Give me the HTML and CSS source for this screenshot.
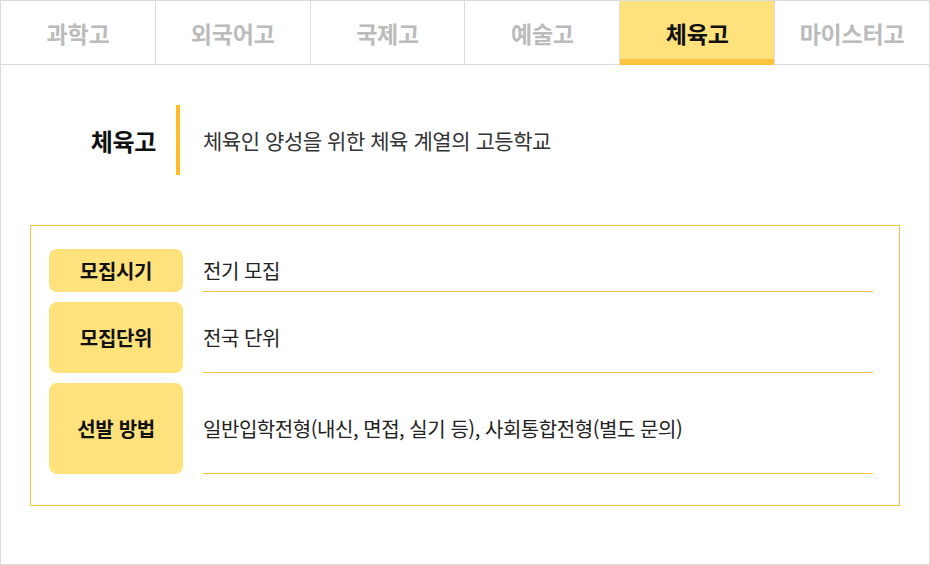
FILE: index.html
```html
<!DOCTYPE html>
<html lang="ko">
<head>
<meta charset="utf-8">
<title>체육고</title>
<link rel="stylesheet" href="styles.css">
</head>
<body>
<div class="frame">
  <nav class="tabs">
    <div class="tab">과학고</div>
    <div class="tab">외국어고</div>
    <div class="tab">국제고</div>
    <div class="tab">예술고</div>
    <div class="tab active">체육고</div>
    <div class="tab">마이스터고</div>
  </nav>
  <section class="intro">
    <h2 class="intro-title">체육고</h2>
    <span class="intro-bar"></span>
    <p class="intro-desc">체육인 양성을 위한 체육 계열의 고등학교</p>
  </section>
  <section class="info">
    <div class="row r1">
      <div class="label">모집시기</div>
      <div class="value">전기 모집</div>
    </div>
    <div class="row r2">
      <div class="label">모집단위</div>
      <div class="value">전국 단위</div>
    </div>
    <div class="row r3">
      <div class="label">선발 방법</div>
      <div class="value">일반입학전형(내신, 면접, 실기 등), 사회통합전형(별도 문의)</div>
    </div>
  </section>
</div>
</body>
</html>
```
FILE: styles.css
```css
* { box-sizing: border-box; }
html, body { margin: 0; padding: 0; background: #fff; }
body { font-family: "Noto Sans CJK KR", "Noto Sans", sans-serif; color: #222; }

.frame {
  width: 930px;
  height: 565px;
  border: 1px solid #dcdcdc;
  background: #fff;
}

.tabs {
  display: flex;
  height: 64px;
}
.tab {
  flex: 1;
  display: flex;
  align-items: center;
  justify-content: center;
  border-bottom: 1px solid #dcdcdc;
  border-left: 1px solid #dcdcdc;
  font-size: 23px;
  font-weight: 700;
  letter-spacing: -0.2px;
  color: #bbbbbb;
  padding-top: 1px;
}
.tab:first-child { border-left: none; }
.tab.active {
  background: #ffe27b;
  color: #111;
  border-bottom-color: #fdc23e;
  box-shadow: inset 0 -5px 0 #fdc23e;
}

.intro {
  display: flex;
  align-items: center;
  height: 70px;
  margin-top: 40px;
}
.intro-title {
  width: 155px;
  margin: 0;
  text-align: right;
  font-size: 24px;
  font-weight: 700;
  color: #111;
  letter-spacing: -0.3px;
}
.intro-bar {
  width: 4px;
  height: 70px;
  background: #fdbd2a;
  margin-left: 20px;
}
.intro-desc {
  margin: 0 0 0 23px;
  font-size: 21px;
  color: #333;
  letter-spacing: -0.45px;
}

.info {
  margin: 50px 29px 0;
  border: 1px solid #fbc23c;
  padding: 23px 26px 31px 18px;
  display: flex;
  flex-direction: column;
  gap: 10px;
}
.row {
  display: grid;
  grid-template-columns: 134px 1fr;
  column-gap: 20px;
}
.r1 { height: 43px; }
.r2 { height: 71px; }
.r3 { height: 91px; }
.label {
  background: #ffe27b;
  border-radius: 8px;
  display: flex;
  align-items: center;
  justify-content: center;
  font-size: 20px;
  font-weight: 700;
  color: #111;
  letter-spacing: -0.3px;
  height: 100%;
}
.value {
  display: flex;
  align-items: center;
  border-bottom: 1px solid #fbc23c;
  font-size: 20px;
  color: #222;
  letter-spacing: -0.45px;
  height: 100%;
  padding-top: 1px;
}
```
